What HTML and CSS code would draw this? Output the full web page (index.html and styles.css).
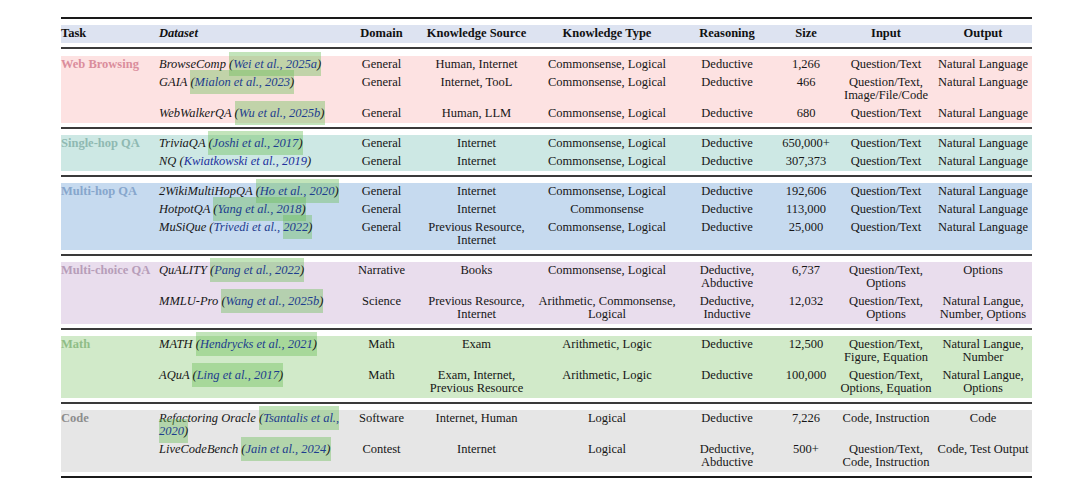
FILE: index.html
```html
<!DOCTYPE html>
<html>
<head>
<meta charset="utf-8">
<link rel="stylesheet" href="styles.css">
</head>
<body>
<div class="table">
  <div class="rule top"></div>

  <div class="band head">
    <div class="cell task">Task</div>
    <div class="cell ds"><i>Dataset</i></div>
    <div class="cell c">Domain</div>
    <div class="cell c">Knowledge Source</div>
    <div class="cell c">Knowledge Type</div>
    <div class="cell c">Reasoning</div>
    <div class="cell c">Size</div>
    <div class="cell c">Input</div>
    <div class="cell c out">Output</div>
  </div>
  <div class="rule mid first"></div>

  <div class="band web">
    <div class="cell task span3">Web Browsing</div>
    <div class="cell ds"><i>BrowseComp <span class="hl">(<span class="cite">Wei et al., 2025a</span>)</span></i></div>
    <div class="cell c">General</div>
    <div class="cell c">Human, Internet</div>
    <div class="cell c">Commonsense, Logical</div>
    <div class="cell c">Deductive</div>
    <div class="cell c">1,266</div>
    <div class="cell c">Question/Text</div>
    <div class="cell c out">Natural Language</div>

    <div class="cell ds"><i>GAIA <span class="hl">(<span class="cite">Mialon et al., 2023</span>)</span></i></div>
    <div class="cell c">General</div>
    <div class="cell c">Internet, TooL</div>
    <div class="cell c">Commonsense, Logical</div>
    <div class="cell c">Deductive</div>
    <div class="cell c">466</div>
    <div class="cell c">Question/Text,<br>Image/File/Code</div>
    <div class="cell c out">Natural Language</div>

    <div class="cell ds"><i>WebWalkerQA <span class="hl">(<span class="cite">Wu et al., 2025b</span>)</span></i></div>
    <div class="cell c">General</div>
    <div class="cell c">Human, LLM</div>
    <div class="cell c">Commonsense, Logical</div>
    <div class="cell c">Deductive</div>
    <div class="cell c">680</div>
    <div class="cell c">Question/Text</div>
    <div class="cell c out">Natural Language</div>
  </div>
  <div class="rule mid"></div>

  <div class="band single">
    <div class="cell task span2">Single-hop QA</div>
    <div class="cell ds"><i>TriviaQA <span class="hl">(<span class="cite">Joshi et al., 2017</span>)</span></i></div>
    <div class="cell c">General</div>
    <div class="cell c">Internet</div>
    <div class="cell c">Commonsense, Logical</div>
    <div class="cell c">Deductive</div>
    <div class="cell c">650,000+</div>
    <div class="cell c">Question/Text</div>
    <div class="cell c out">Natural Language</div>

    <div class="cell ds"><i>NQ (<span class="cite plain">Kwiatkowski et al., 2019</span>)</i></div>
    <div class="cell c">General</div>
    <div class="cell c">Internet</div>
    <div class="cell c">Commonsense, Logical</div>
    <div class="cell c">Deductive</div>
    <div class="cell c">307,373</div>
    <div class="cell c">Question/Text</div>
    <div class="cell c out">Natural Language</div>
  </div>
  <div class="rule mid"></div>

  <div class="band multi">
    <div class="cell task span3">Multi-hop QA</div>
    <div class="cell ds"><i>2WikiMultiHopQA <span class="hl">(<span class="cite">Ho et al., 2020</span>)</span></i></div>
    <div class="cell c">General</div>
    <div class="cell c">Internet</div>
    <div class="cell c">Commonsense, Logical</div>
    <div class="cell c">Deductive</div>
    <div class="cell c">192,606</div>
    <div class="cell c">Question/Text</div>
    <div class="cell c out">Natural Language</div>

    <div class="cell ds"><i>HotpotQA <span class="hl">(<span class="cite">Yang et al., 2018</span>)</span></i></div>
    <div class="cell c">General</div>
    <div class="cell c">Internet</div>
    <div class="cell c">Commonsense</div>
    <div class="cell c">Deductive</div>
    <div class="cell c">113,000</div>
    <div class="cell c">Question/Text</div>
    <div class="cell c out">Natural Language</div>

    <div class="cell ds"><i>MuSiQue (<span class="cite">Trivedi et al., </span><span class="hl"><span class="cite">2022</span>)</span></i></div>
    <div class="cell c">General</div>
    <div class="cell c">Previous Resource,<br>Internet</div>
    <div class="cell c">Commonsense, Logical</div>
    <div class="cell c">Deductive</div>
    <div class="cell c">25,000</div>
    <div class="cell c">Question/Text</div>
    <div class="cell c out">Natural Language</div>
  </div>
  <div class="rule mid"></div>

  <div class="band choice">
    <div class="cell task span2">Multi-choice QA</div>
    <div class="cell ds"><i>QuALITY <span class="hl">(<span class="cite">Pang et al., 2022</span>)</span></i></div>
    <div class="cell c">Narrative</div>
    <div class="cell c">Books</div>
    <div class="cell c">Commonsense, Logical</div>
    <div class="cell c">Deductive,<br>Abductive</div>
    <div class="cell c">6,737</div>
    <div class="cell c">Question/Text,<br>Options</div>
    <div class="cell c out">Options</div>

    <div class="cell ds"><i>MMLU-Pro <span class="hl">(<span class="cite">Wang et al., 2025b</span>)</span></i></div>
    <div class="cell c">Science</div>
    <div class="cell c">Previous Resource,<br>Internet</div>
    <div class="cell c">Arithmetic, Commonsense,<br>Logical</div>
    <div class="cell c">Deductive,<br>Inductive</div>
    <div class="cell c">12,032</div>
    <div class="cell c">Question/Text,<br>Options</div>
    <div class="cell c out">Natural Langue,<br>Number, Options</div>
  </div>
  <div class="rule mid"></div>

  <div class="band math">
    <div class="cell task span2">Math</div>
    <div class="cell ds"><i>MATH <span class="hl">(<span class="cite">Hendrycks et al., 2021</span>)</span></i></div>
    <div class="cell c">Math</div>
    <div class="cell c">Exam</div>
    <div class="cell c">Arithmetic, Logic</div>
    <div class="cell c">Deductive</div>
    <div class="cell c">12,500</div>
    <div class="cell c">Question/Text,<br>Figure, Equation</div>
    <div class="cell c out">Natural Langue,<br>Number</div>

    <div class="cell ds"><i>AQuA <span class="hl">(<span class="cite">Ling et al., 2017</span>)</span></i></div>
    <div class="cell c">Math</div>
    <div class="cell c">Exam, Internet,<br>Previous Resource</div>
    <div class="cell c">Arithmetic, Logic</div>
    <div class="cell c">Deductive</div>
    <div class="cell c">100,000</div>
    <div class="cell c">Question/Text,<br>Options, Equation</div>
    <div class="cell c out">Natural Langue,<br>Options</div>
  </div>
  <div class="rule mid"></div>

  <div class="band code">
    <div class="cell task span2">Code</div>
    <div class="cell ds"><i>Refactoring Oracle <span class="hl">(<span class="cite">Tsantalis et al.,</span></span><br><span class="hl"><span class="cite">2020</span>)</span></i></div>
    <div class="cell c">Software</div>
    <div class="cell c">Internet, Human</div>
    <div class="cell c">Logical</div>
    <div class="cell c">Deductive</div>
    <div class="cell c">7,226</div>
    <div class="cell c">Code, Instruction</div>
    <div class="cell c out">Code</div>

    <div class="cell ds"><i>LiveCodeBench <span class="hl">(<span class="cite">Jain et al., 2024</span>)</span></i></div>
    <div class="cell c">Contest</div>
    <div class="cell c">Internet</div>
    <div class="cell c">Logical</div>
    <div class="cell c">Deductive,<br>Abductive</div>
    <div class="cell c">500+</div>
    <div class="cell c">Question/Text,<br>Code, Instruction</div>
    <div class="cell c out">Code, Test Output</div>
  </div>
  <div class="rule bottom"></div>
</div>
</body>
</html>
```

FILE: styles.css
```css
html, body {
  margin: 0;
  padding: 0;
  background: #ffffff;
}

body {
  font-family: "Liberation Serif", "Times New Roman", serif;
  font-size: 12.5px;
  color: #161616;
}

.table {
  width: 971px;
  margin-left: 61px;
  padding-top: 17px;
}

.rule {
  height: 2px;
  background: #2a2a2a;
}

.rule.top {
  background: #1a1a1a;
  margin-bottom: 6px;
}

.rule.mid {
  margin-top: 4px;
  margin-bottom: 6px;
  background: #3a3a3a;
}

.rule.mid.first {
  margin-bottom: 7px;
}

.rule.bottom {
  margin-top: 4px;
  background: #1a1a1a;
}

.band {
  display: grid;
  grid-template-columns: 96px 193px 63px 127px 134px 106px 52px 108px 92px;
  align-items: start;
}

.cell {
  padding: 2px 0 3px;
  line-height: 13px;
  white-space: nowrap;
}

.cell.ds {
  padding-left: 2px;
}

.cell.c {
  display: flex;
  flex-direction: column;
  align-items: center;
  text-align: center;
}

.cell.out {
  padding-right: 6px;
}

.task {
  font-weight: bold;
}

.span2 {
  grid-row: span 2;
}

.span3 {
  grid-row: span 3;
}

.head {
  background: #dde3f1;
  font-weight: bold;
  color: #111;
}

.web { background: #fde2e2; }
.web .task { color: #da8d9c; }

.single { background: #cde8e4; }
.single .task { color: #8fb9b2; }

.multi { background: #c6daef; }
.multi .task { color: #86a6cc; }

.choice { background: #e9dded; }
.choice .task { color: #b79db9; }

.math { background: #d1eac9; }
.math .task { color: #8fbd87; }

.code { background: #e6e6e6; }
.code .task { color: #8d8d8d; }

.hl {
  background: rgba(110, 190, 90, 0.42);
  padding: 5px 0;
}

.cite {
  color: #1d3c8e;
}

.cite.plain {
  color: #22309e;
}
```
